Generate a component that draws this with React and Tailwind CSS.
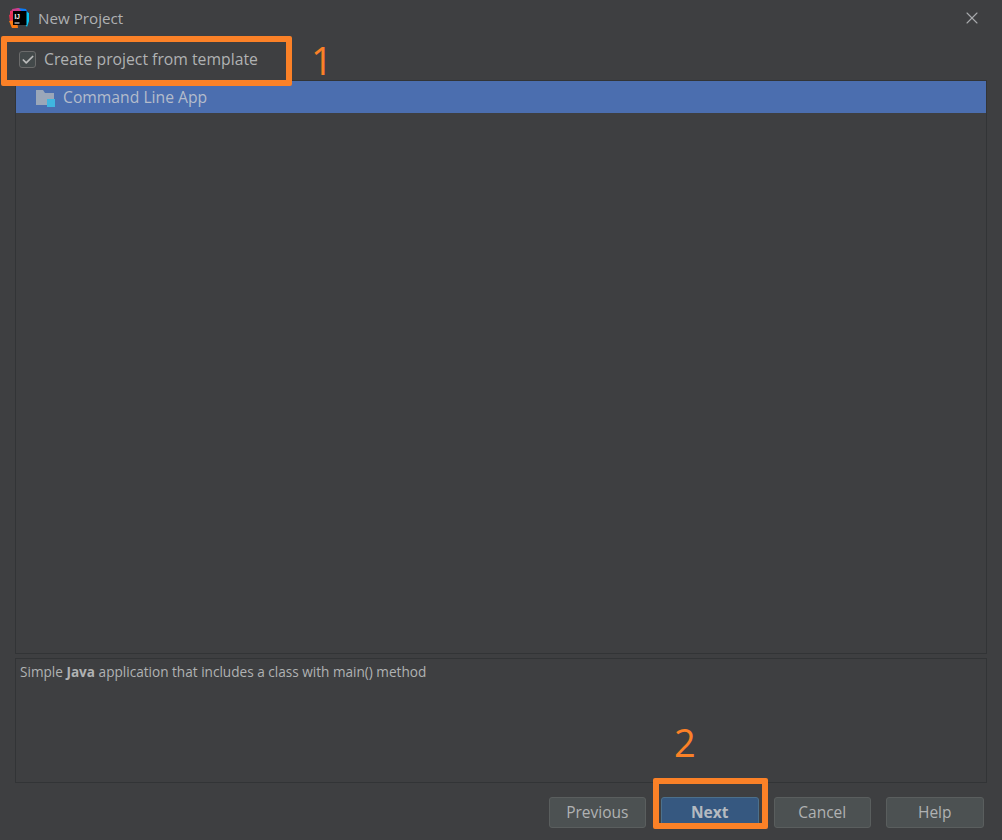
import React from "react";
import { X, Check } from "lucide-react";

function IdeaLogo() {
  return (
    <svg width="21" height="21" viewBox="0 0 21 21" className="shrink-0">
      <polygon points="1,3 9,0 13,4 6,9 1,8" fill="#e8336b" />
      <polygon points="0,7 6,4 8,14 3,19 1,14" fill="#e3324f" />
      <polygon points="0,13 8,12 9,20 3,20" fill="#f97a12" />
      <polygon points="9,0 17,1 20,7 18,13 12,7" fill="#087cfa" />
      <polygon points="15,3 20,5 20,13 18,19 13,12" fill="#07c3f2" />
      <polygon points="3,1 10,0 13,4 5,7" fill="#c9408f" />
      <rect x="4" y="3" width="13.5" height="14" fill="#000000" />
      <rect x="5.5" y="14.5" width="5" height="1" fill="#ffffff" />
      <text x="5.5" y="10.5" fontSize="6.5" fontWeight="700" fill="#ffffff" fontFamily="'Liberation Sans', sans-serif">IJ</text>
    </svg>
  );
}

function FolderIcon() {
  return (
    <svg width="20" height="18" viewBox="0 0 20 18" className="shrink-0">
      <path d="M0 1h7l2 3h9v6h-7v6H0z" fill="#9aa7b9" />
      <rect x="11" y="10" width="8" height="8" fill="#40b6e0" />
    </svg>
  );
}

function FooterButton({ label, primary }) {
  return (
    <button
      className={`h-[31px] w-[97.5px] rounded-[3px] border text-[15.5px] ${
        primary
          ? "border-[#4c708c] bg-[#365880] font-bold text-[#b5bac0]"
          : "border-[#5a5e5e] bg-[#4c5152] text-[#b0b2b3]"
      }`}
    >
      {label}
    </button>
  );
}

export default function App() {
  return (
    <div className="relative flex h-[840px] w-[1002px] flex-col overflow-hidden bg-[#3e3f41] font-['Open_Sans','Noto_Sans',sans-serif] text-[#b0b2b3]">
      {/* title bar */}
      <div className="flex h-[36px] items-center gap-[8px] pl-[9px] pr-[20px]">
        <IdeaLogo />
        <span className="text-[15.2px] text-[#afb1b3]">New Project</span>
        <X className="ml-auto h-[20px] w-[20px] text-[#a9abad]" strokeWidth={1.3} />
      </div>

      {/* template checkbox */}
      <div className="flex h-[44px] items-center gap-[8px] pt-[3px] pl-[19px]">
        <div className="flex h-[17px] w-[17px] items-center justify-center rounded-[3px] border border-[#6b6b6b] bg-[#43494a]">
          <Check className="h-[14px] w-[14px] text-[#bbbbbb]" strokeWidth={3} />
        </div>
        <span className="text-[15.75px]">Create project from template</span>
      </div>

      {/* template list */}
      <div className="mx-[15px] h-[574px] border border-[#323436]">
        <div className="flex h-[32px] items-center gap-[7px] bg-[#4b6eaf] pl-[20px] pt-[1px] text-[#b4bccb]">
          <FolderIcon />
          <span className="text-[15.7px]">Command Line App</span>
        </div>
      </div>

      {/* description */}
      <div className="mx-[15px] mt-[4px] h-[125px] border border-[#323436] pl-[4px] pt-[4px] text-[13.6px] leading-[18px]">
        Simple <b>Java</b> application that includes a class with main() method
      </div>

      {/* footer buttons */}
      <div className="mt-[14px] flex justify-end gap-[15px] pr-[18.5px]">
        <FooterButton label="Previous" />
        <FooterButton label="Next" primary />
        <FooterButton label="Cancel" />
        <FooterButton label="Help" />
      </div>

      {/* orange annotations */}
      <div className="absolute left-[1px] top-[36px] h-[50px] w-[291px] rounded-[2px] border-[6px] border-[#fb8127]" />
      <span className="absolute left-[311px] top-[35px] text-[38px] leading-[50px] text-[#fb8127]">1</span>
      <div className="absolute left-[653px] top-[778px] h-[51px] w-[115px] rounded-[2px] border-[6px] border-[#fb8127]" />
      <span className="absolute left-[674px] top-[717px] text-[38px] leading-[50px] text-[#fb8127]">2</span>
    </div>
  );
}
